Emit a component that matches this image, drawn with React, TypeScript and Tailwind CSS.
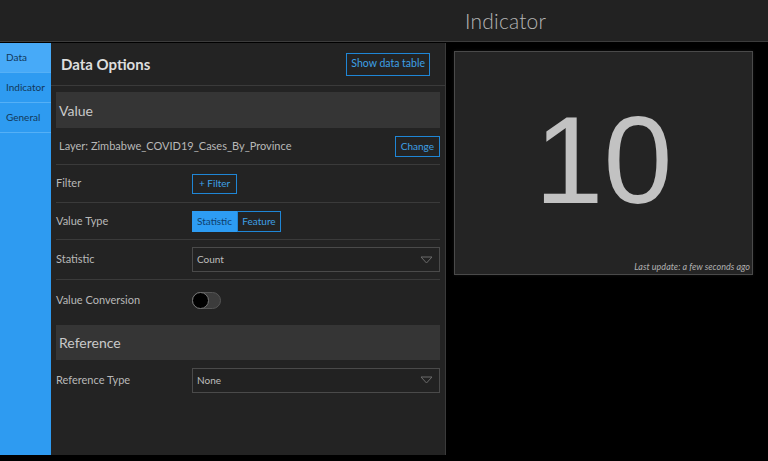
import React from 'react';

const font = { fontFamily: 'Lato, "Noto Sans", "Liberation Sans", sans-serif' };

const Chevron: React.FC = () => (
  <svg width="13" height="8" viewBox="0 0 13 8" className="shrink-0">
    <path d="M1 1 L6.5 7 L12 1 Z" fill="none" stroke="#6a6a6a" strokeWidth="1" />
  </svg>
);

const Select: React.FC<{ value: string }> = ({ value }) => (
  <div className="w-[248px] h-[25px] border border-[#4a4a4a] bg-[#222222] flex items-center justify-between pl-[4px] pr-[6px]">
    <span className="text-[10px] text-[#bdbdbd]">{value}</span>
    <Chevron />
  </div>
);

const Row: React.FC<{ label: string; h: string; border?: boolean; children?: React.ReactNode }> = ({ label, h, border = true, children }) => (
  <div className={`flex items-center ${h} ${border ? 'border-b border-[#3a3a3a]' : ''}`}>
    <div className="w-[136px] text-[11px] text-[#b8b8b8]">{label}</div>
    {children}
  </div>
);

const tabs = ['Data', 'Indicator', 'General'];

export default function App() {
  return (
    <div className="w-[768px] h-[461px] bg-black flex flex-col overflow-hidden" style={font}>
      <header className="h-[42px] shrink-0 bg-[#222222] border-b border-[#3c3c3c] flex items-center pl-[465px]">
        <h1 className="text-[21px] text-[#b4b4b4] font-light tracking-[0.2px]">Indicator</h1>
      </header>

      <div className="flex h-[413px] pt-[1px]">
        <nav className="w-[51px] shrink-0 bg-[#2e9bf1] flex flex-col">
          {tabs.map((t, i) => (
            <div
              key={t}
              className={`h-[30px] flex items-center pl-[6px] text-[10px] text-[#12385a] border-b border-[#55b0f6] ${i === 0 ? 'bg-[#47aaf8]' : ''}`}
            >
              {t}
            </div>
          ))}
        </nav>

        <main className="w-[395px] shrink-0 bg-[#232323] border-r border-[#3a3a3a] flex flex-col">
          <div className="h-[43px] border-b border-[#3a3a3a] flex items-center justify-between pl-[10px] pr-[15px]">
            <h2 className="text-[15px] font-bold text-[#dedede]">Data Options</h2>
            <button className="h-[23px] px-[4px] border border-[#1f86d6] text-[10.5px] text-[#3ea0e6]">Show data table</button>
          </div>

          <div className="px-[5px] pt-[6px] flex flex-col">
            <div className="h-[36px] bg-[#353535] flex items-center pl-[3px] text-[14px] text-[#c9c9c9]">Value</div>

            <div className="h-[37px] border-b border-[#3a3a3a] flex items-center justify-between pl-[3px]">
              <span className="text-[11px] text-[#b8b8b8]">Layer: Zimbabwe_COVID19_Cases_By_Province</span>
              <button className="h-[21px] px-[5px] border border-[#1f86d6] text-[10px] text-[#3ea0e6]">Change</button>
            </div>

            <Row label="Filter" h="h-[38px]">
              <button className="h-[20px] px-[6px] border border-[#1f86d6] text-[10px] text-[#3ea0e6]">+ Filter</button>
            </Row>

            <Row label="Value Type" h="h-[37px]">
              <div className="flex h-[21px]">
                <button className="w-[45px] bg-[#2d9cf3] border border-[#2d9cf3] text-[10px] text-[#0f3f6e]">Statistic</button>
                <button className="w-[44px] border border-[#1f86d6] text-[10px] text-[#3ea0e6]">Feature</button>
              </div>
            </Row>

            <Row label="Statistic" h="h-[40px]">
              <Select value="Count" />
            </Row>

            <Row label="Value Conversion" h="h-[40px]" border={false}>
              <div className="w-[29px] h-[17px] rounded-full bg-[#3c3c3c] border border-[#555555] relative">
                <div className="absolute left-[-1px] top-[-1px] w-[17px] h-[17px] rounded-full bg-black border border-[#777777]" />
              </div>
            </Row>

            <div className="h-[35px] mt-[5px] bg-[#353535] flex items-center pl-[3px] text-[14px] text-[#c9c9c9]">Reference</div>

            <Row label="Reference Type" h="h-[40px]" border={false}>
              <Select value="None" />
            </Row>
          </div>
        </main>

        <section className="flex-1 bg-black pl-[8px] pt-[8px]">
          <div className="w-[299px] h-[224px] bg-[#242424] border border-[#4a4a4a] flex flex-col shadow-[0_0_3px_rgba(255,255,255,0.08)]">
            <div className="flex-1 flex items-center justify-center pt-[8px]">
              <span className="text-[124px] leading-none text-[#c2c2c2]" style={{ fontFamily: '"Liberation Sans", Arial, sans-serif' }}>10</span>
            </div>
            <div className="h-[14px] flex items-center justify-end pr-[2px]">
              <span className="text-[9px] italic text-[#b0b0b0]">Last update: a few seconds ago</span>
            </div>
          </div>
        </section>
      </div>
    </div>
  );
}
